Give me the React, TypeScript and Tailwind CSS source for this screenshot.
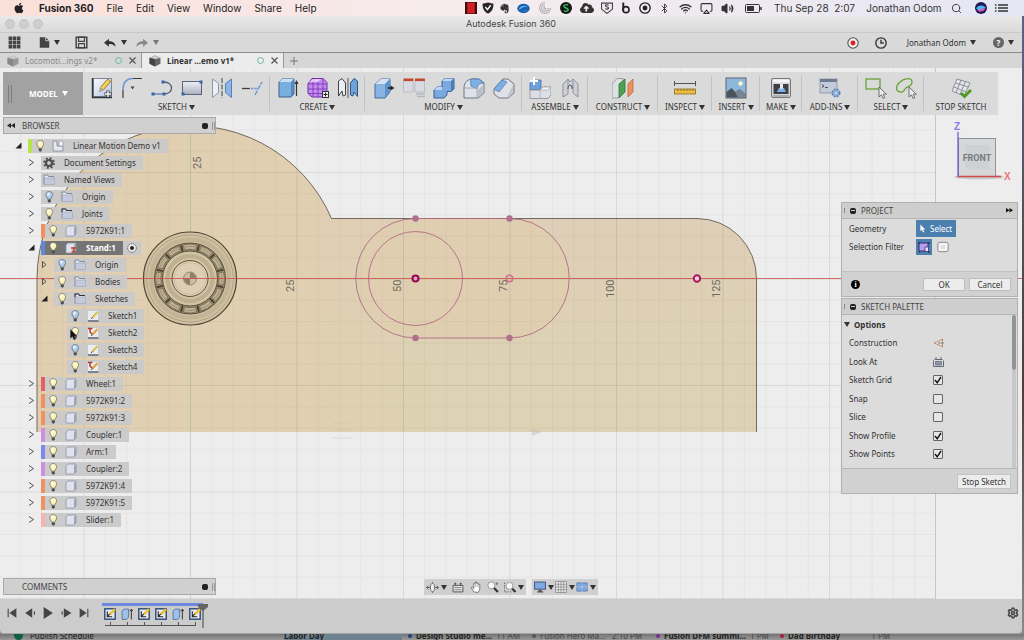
import { useState, type ReactNode } from "react";
import { clsx } from "clsx";
import { Airplay, Bluetooth, Search, Settings, Volume2, Wifi } from "lucide-react";
import { FaApple, FaCloudUploadAlt, FaEvernote } from "react-icons/fa";

type IconProps = { className?: string; children: ReactNode };

function Icon({ className = "size-[22px]", children }: IconProps) {
  return (
    <svg viewBox="0 0 22 22" fill="none" className={clsx("shrink-0", className)} aria-hidden="true">
      {children}
    </svg>
  );
}

function Caret({ className = "w-[6px]" }: { className?: string }) {
  return (
    <svg viewBox="0 0 6 5" className={clsx("shrink-0", className)} aria-hidden="true">
      <path d="M0 0h6L3 5z" fill="currentColor" />
    </svg>
  );
}

/* toolbar icons */

function Nodes({ at }: { at: number[][] }) {
  return (
    <>
      {at.map(([x, y]) => (
        <rect key={`${x}-${y}`} x={x - 1.5} y={y - 1.5} width="3" height="3" fill="#3465b5" />
      ))}
    </>
  );
}

function Cursor({ x, y }: { x: number; y: number }) {
  return (
    <path
      transform={`translate(${x} ${y})`}
      d="M0 0v10l2.4-2.2L4 11.4l1.8-.8-1.6-3.4h3.2z"
      fill="#e9e9ef"
      stroke="#555"
      strokeWidth=".8"
    />
  );
}

const icons = {
  newSketch: (
    <Icon>
      <defs>
        <linearGradient id="sheet" x1="0" y1="0" x2="1" y2="1">
          <stop offset="0" stopColor="#fbfcff" />
          <stop offset="1" stopColor="#b4c1db" />
        </linearGradient>
      </defs>
      <rect x="2.500" y="1.500" width="18" height="18" fill="url(#sheet)" stroke="#7d8696" />
      <path d="M1.500 1v20M1 20.500h20" stroke="#2d3440" strokeWidth="1.400" />
      <path d="M11 11.500l7.500-8.500" stroke="#9b7320" strokeWidth="4.400" />
      <path d="M11 11.500l7-8" stroke="#f3d355" strokeWidth="3" />
      <path d="M8.500 14.500l1-3.500 2.500 2z" fill="#efe0c0" stroke="#444" strokeWidth=".5" />
      <path d="M17 13.500v7M13.500 17h7" stroke="#333" strokeWidth="3" />
      <path d="M17 14v6M14 17h6" stroke="#fff" strokeWidth="1.400" />
    </Icon>
  ),
  fillet2d: (
    <Icon>
      <path d="M2 21v-8M12 1.500h9" stroke="#3d3d3d" strokeWidth="1.200" />
      <path d="M2 13C2 5.500 5.500 1.500 12 1.500" stroke="#6e9ad6" strokeWidth="1.600" />
      <path d="M9.500 9.500h4l-2 3z" fill="#444" />
    </Icon>
  ),
  arc: (
    <Icon>
      <path d="M2 17h10" stroke="#4a6fae" strokeWidth="1.200" />
      <path d="M13 5c10 0 10 12 0 12" stroke="#555e6c" strokeWidth="1.300" />
      <Nodes at={[[2, 17], [13, 17], [12, 5]]} />
    </Icon>
  ),
  rectangle: (
    <Icon>
      <defs>
        <linearGradient id="rectFill" x1="0" y1="0" x2="0" y2="1">
          <stop offset="0" stopColor="#eef0f5" />
          <stop offset="1" stopColor="#a9b0bf" />
        </linearGradient>
      </defs>
      <rect x="1.500" y="4.500" width="19" height="13" fill="url(#rectFill)" stroke="#5a6474" />
      <Nodes at={[[20, 5], [2, 17]]} />
    </Icon>
  ),
  mirror2d: (
    <Icon>
      <path d="M1.500 2l6 4.500v9l-6 5z" fill="#eceef2" stroke="#9298a3" />
      <path d="M11 1v20" stroke="#444" strokeDasharray="5 1.500" />
      <path d="M20.500 2l-6 4.500v9l6 5z" fill="#8db4e2" stroke="#5482bd" />
    </Icon>
  ),
  trim: (
    <Icon>
      <path d="M1 11.500h8" stroke="#3d3d3d" strokeWidth="1.300" />
      <path d="M10 11.500h6" stroke="#6e9ad6" strokeWidth="1.300" strokeDasharray="2.500 1" />
      <path d="M14 18l7-13" stroke="#6e9ad6" strokeWidth="1.500" strokeDasharray="5 1" />
    </Icon>
  ),
  extrude: (
    <Icon>
      <path d="M2 5l3-3h12v15l-3 3H2z" fill="#79aee0" stroke="#3f5f8a" />
      <path d="M2 5l3-3h12l-3 3z" fill="#c9dff4" />
      <path d="M14 5v15l3-3V2z" fill="#5688bf" />
      <path d="M19.500 19V5" stroke="#333" strokeWidth="1.200" />
      <path d="M17.500 7h4l-2-4z" fill="#333" />
    </Icon>
  ),
  form: (
    <Icon>
      <path d="M5 1.500h11l4 4v10l-4 4.500H5l-4-3.500v-10z" fill="#c58cf0" stroke="#6f2bab" />
      <path d="M1 7h19M1 12h19M2 16.500h17M6 1.500v18M11 1.500v18.500M16 1.500v18" stroke="#7d3bb8" strokeWidth=".9" />
      <path d="M2 5l4-3h8l-3 3z" fill="#e3c5fa" />
      <rect x="15.500" y="14.500" width="6" height="6" fill="#eee" stroke="#333" />
      <path d="M18.500 15.500v4M16.500 17.500h4" stroke="#222" />
    </Icon>
  ),
  mirror3d: (
    <Icon>
      <path d="M1.500 4L5 1.500 8.500 6v12l-2.500 1-1-5-3.500 5z" fill="#eceef2" stroke="#3c4149" />
      <path d="M11 1v20" stroke="#555" />
      <path d="M20.500 4v15.500L17 15l-1 4-2.500-1V6L17 1.500z" fill="#6fa3dc" stroke="#34577f" />
    </Icon>
  ),
  pressPull: (
    <Icon>
      <path d="M2 7l6-5h9v13l-5 6H2z" fill="#86b3e2" stroke="#4a6c99" />
      <path d="M2 7l6-5h9l-5 5z" fill="#d5e2f1" />
      <path d="M12 7v14l5-6V2z" fill="#5f92c9" />
      <path d="M15 11h3" stroke="#222" strokeWidth="1.600" />
      <path d="M17.500 8.500v5l4-2.500z" fill="#222" />
    </Icon>
  ),
  replaceFace: (
    <Icon>
      <path d="M.5 4h9.500v11H.5zM12 4h9.500v11H12z" fill="#d9dbe2" stroke="#a9abb4" strokeWidth=".6" />
      <path d="M.5 1.500h10v2.500H.5zM12 1.500h10v2.500H12z" fill="#c4472f" />
      <path d="M13 17h9M14 19.500h8" stroke="#b5b8c1" strokeWidth="1.500" />
    </Icon>
  ),
  combine: (
    <Icon>
      <path d="M9 4l3-2.500h9V12l-3 2.500h-4V18l-3 3H1v-8l3-3h5z" fill="#79a9de" stroke="#3c6297" />
      <path d="M9 4l3-2.500h9L18 4zM1 13l3-3h5v3z" fill="#bed7f2" />
      <path d="M18 4l3-2.500V12l-3 2.500z" fill="#4c7db9" />
    </Icon>
  ),
  fillet3d: (
    <Icon>
      <path d="M1 11c0-6 4-9 9-9h6l5 4v10l-6 5H1z" fill="#dfe1e8" stroke="#6e7480" />
      <path d="M8 2h8l5 4c-5 0-7 3-7 6L8 9c0-3-1-5 0-7z" fill="#7fb0e4" stroke="#4a74a8" strokeWidth=".7" />
      <path d="M2 11h10c2 0 2 2 2 3v6" stroke="#a5aab5" />
      <path d="M14.500 13l6-5v8l-6 4.500z" fill="#bcc0ca" />
    </Icon>
  ),
  chamfer: (
    <Icon>
      <path d="M1 12l9-10h5l6 5v9l-6 5H6l-5-4z" fill="#dfe1e8" stroke="#6e7480" />
      <path d="M9 3l5 2-8 10-5-3z" fill="#7fb0e4" stroke="#4a74a8" strokeWidth=".7" />
      <path d="M14 20l6-4V8z" fill="#c2c5ce" />
    </Icon>
  ),
  newComponent: (
    <Icon>
      <path d="M1 6l3-3h8v8l-2 2H1z" fill="#6da1db" stroke="#486f9f" strokeWidth=".8" />
      <path d="M1 13h10v-1l3-2h8v8l-3 3.500H1z" fill="#dcdee5" stroke="#858a95" strokeWidth=".8" />
      <path d="M11 13l3-3h8l-3 3zM11 13v8" fill="#f1f2f5" stroke="#9a9ea9" strokeWidth=".6" />
      <path d="M5 0v8M1 4h8" stroke="#fff" strokeWidth="2" />
    </Icon>
  ),
  joint: (
    <Icon>
      <path d="M4 7l5-5 2 3 3-3 5 5v13l-5-4v-6l-3-2-2 2v7l-5 3z" fill="#cfd0d7" stroke="#8a8d96" strokeWidth=".9" />
      <path d="M9 2v9M14 2v9" stroke="#8a8d96" strokeWidth=".9" />
      <path d="M9 12c0-5 4-5 4 0" stroke="#666a73" strokeWidth="1.200" />
    </Icon>
  ),
  plane: (
    <Icon>
      <path d="M0 7l5-5.500h6v14L6 21H0z" fill="#dfe0e4" stroke="#8a8d96" strokeWidth=".8" />
      <path d="M7 7l6-5v13l-6 6z" fill="#4fa052" stroke="#2e7634" strokeWidth=".8" />
      <path d="M16 7l5-5v13l-5 5z" fill="#ec9161" stroke="#c7683a" strokeWidth=".8" />
    </Icon>
  ),
  measure: (
    <Icon>
      <path d="M0 6.500h22M.5 4v5M21.500 4v5" stroke="#555" />
      <rect x=".5" y="12" width="21" height="5" fill="#e9bc43" stroke="#8f6a1a" strokeWidth=".8" />
      <path d="M4 12v2M7 12v2M10 12v2M13 12v2M16 12v2M19 12v2" stroke="#6d5010" strokeWidth=".7" />
    </Icon>
  ),
  image: (
    <Icon>
      <rect x="1" y="1" width="20" height="20" fill="#8db8dc" stroke="#596473" />
      <circle cx="15.500" cy="6.500" r="2.200" fill="#fdf6c8" />
      <path d="M1.500 15l5-4 4 4 4-3 6 5v3.500h-19z" fill="#4c535d" />
      <path d="M10 15l4.500-3 6 5v3.500H13z" fill="#798592" />
    </Icon>
  ),
  print: (
    <Icon>
      <rect x="1.500" y="1.500" width="19" height="19" rx="1.500" fill="#d5d6da" stroke="#777" />
      <rect x="3" y="2.500" width="16" height="3" fill="#f5f5f5" />
      <rect x="3.500" y="7" width="15" height="10" fill="#3d4046" />
      <path d="M7 15l2-4h5l2 4z" fill="#7eb1e6" />
      <path d="M10 7h3v4l-1.500 1.500L10 11z" fill="#e9e9e9" />
      <path d="M3 19h16" stroke="#888" />
    </Icon>
  ),
  script: (
    <Icon>
      <rect x="1" y="2" width="17" height="14" fill="#c3cad9" stroke="#8590a6" strokeWidth=".8" />
      <rect x="1" y="2" width="17" height="3" fill="#6f7b92" />
      <path d="M3 7.500l2 1.500-2 1.500M6 10.500h3" stroke="#444" strokeWidth=".9" />
      <circle cx="17" cy="16" r="3.500" fill="#a9c6e8" stroke="#5b82b5" strokeWidth="2" strokeDasharray="1.800 1" />
      <circle cx="17" cy="16" r="1.300" fill="#eee" stroke="#5b82b5" strokeWidth=".5" />
    </Icon>
  ),
  windowSelect: (
    <Icon>
      <rect x="1" y="2" width="14" height="10" stroke="#68a336" strokeWidth="1.300" />
      <Cursor x={14} y={10} />
    </Icon>
  ),
  freeSelect: (
    <Icon>
      <path d="M5 15C0 14 1 8 5 5c4-4 12-5 12 0s-5 4-7 7c-1 2-2 4-5 3z" stroke="#68a336" strokeWidth="1.300" />
      <Cursor x={14} y={10} />
    </Icon>
  ),
  stopSketch: (
    <Icon>
      <path d="M7 2l13 4-6 13-12-5z" fill="#e2e4ea" stroke="#7a7f8b" strokeWidth=".8" />
      <path d="M5.500 6l13 4M4 10l12 5M11 3L6 16M15.500 4.500L10 17.500" stroke="#7a7f8b" strokeWidth=".8" />
      <path d="M11 16l3.500 3.500L21 13" stroke="#4f9a27" strokeWidth="3" />
    </Icon>
  ),
};

const groups = [
  { name: "SKETCH", width: "w-[187px]", tools: ["newSketch", "fillet2d", "arc", "rectangle", "mirror2d", "trim"] },
  { name: "CREATE", width: "w-[95px]", tools: ["extrude", "form", "mirror3d"] },
  { name: "MODIFY", width: "w-[157px]", tools: ["pressPull", "replaceFace", "combine", "fillet3d", "chamfer"] },
  { name: "ASSEMBLE", width: "w-[66px]", tools: ["newComponent", "joint"] },
  { name: "CONSTRUCT", width: "w-[70px]", tools: ["plane"] },
  { name: "INSPECT", width: "w-[54px]", tools: ["measure"] },
  { name: "INSERT", width: "w-[48px]", tools: ["image"] },
  { name: "MAKE", width: "w-[42px]", tools: ["print"] },
  { name: "ADD-INS", width: "w-[56px]", tools: ["script"] },
  { name: "SELECT", width: "w-[66px]", tools: ["windowSelect", "freeSelect"] },
  { name: "STOP SKETCH", width: "w-[74px]", tools: ["stopSketch"] },
] as { name: string; width: string; tools: (keyof typeof icons)[] }[];

function Toolbar() {
  return (
    <div className="relative mt-1 ml-[3px] flex h-[43px] w-fit bg-[#dadada]">
      <button className="flex w-20 items-center gap-[17px] bg-[#a2a2a2] pl-[5px] text-[8px] font-bold text-white">
        <span className="h-[18px] w-1 border-x border-[#7d7d7d]" />
        <span className="flex items-center gap-1">
          MODEL <Caret />
        </span>
      </button>
      {groups.map((group) => (
        <div key={group.name} className={clsx("relative flex flex-col items-center pt-[5px]", group.width)}>
          <div className="flex gap-2">
            {group.tools.map((tool) => (
              <button key={tool} aria-label={tool}>
                {icons[tool]}
              </button>
            ))}
          </div>
          <button className="mt-[3px] flex items-center gap-[2px] text-[8px] leading-[10px] whitespace-nowrap text-[#333]">
            {group.name}
            {group.name !== "STOP SKETCH" && <Caret />}
          </button>
          {group.name !== "STOP SKETCH" && <span className="absolute inset-y-1 right-0 w-px bg-[#c2c2c2]" />}
        </div>
      ))}
    </div>
  );
}

/* browser tree */

type Glyph = "bulb" | "bulbOff" | "folder" | "folderDark" | "gear" | "cube" | "stand" | "doc" | "sketch" | "sketchRed";

function TreeIcon({ kind }: { kind: Glyph }) {
  switch (kind) {
    case "bulb":
    case "bulbOff":
      return (
        <svg viewBox="0 0 10 14" className="h-[12px]">
          <path
            d="M5 .6C2.400.6 1 2.400 1 4.600 1 6.500 3 7.500 3 9.500h4c0-2 2-3 2-4.900C9 2.400 7.600.6 5 .6z"
            fill={kind === "bulb" ? "#fbf2b5" : "#a9cdf5"}
            stroke="#6b6650"
            strokeWidth=".8"
          />
          <ellipse cx="4" cy="3.600" rx="1.500" ry="1.800" fill="#fff" opacity=".8" />
          <path d="M3.200 10h3.600v2.500L5 13.600l-1.800-1.100z" fill="#4d4d4d" />
        </svg>
      );
    case "folder":
    case "folderDark":
      return (
        <svg viewBox="0 0 12 11" className="w-[12px]">
          <path d="M1 10.500V1h3.500l1 1.500H11" fill="#e3e6f0" stroke="#7b8190" strokeWidth=".9" />
          <path d="M1.500 4h10v6.500h-10z" fill="#c4cadd" stroke="#9ba1b3" strokeWidth=".6" />
          {kind === "folderDark" && <path d="M1 4V1h3.500l1 1.500H11" stroke="#2f3441" strokeWidth="1.100" fill="none" />}
        </svg>
      );
    case "gear":
      return (
        <svg viewBox="0 0 12 12" className="w-[12px]">
          <circle cx="6" cy="6" r="4.900" fill="none" stroke="#4c4c4c" strokeWidth="1.800" strokeDasharray="2 1.850" />
          <circle cx="6" cy="6" r="3" fill="none" stroke="#4c4c4c" strokeWidth="2.200" />
        </svg>
      );
    case "doc":
      return (
        <svg viewBox="0 0 12 12" className="w-[12px]">
          <path d="M1 1v10h10V6H5V1z" fill="#e6e8ee" stroke="#8a8f9b" strokeWidth=".9" />
          <path d="M7 1h3l1 1v4H7z" fill="#f6f7fa" stroke="#8a8f9b" strokeWidth=".7" />
        </svg>
      );
    case "cube":
    case "stand":
      return (
        <svg viewBox="0 0 12 12" className="w-[12px]">
          <path d="M1 3l2-2h8v8l-2 2H1z" fill="#dfe2ee" stroke="#8d92a1" strokeWidth=".8" />
          <path d="M9 3l2-2v8l-2 2z" fill="#9da3b7" />
          {kind === "stand" && <path d="M6 6h5M8.500 5v6M6.500 10h4" stroke="#c04a32" strokeWidth="1.600" />}
        </svg>
      );
    default:
      return (
        <svg viewBox="0 0 12 12" className="w-[12px]">
          <path d="M1 1h10v9H1z" fill="#e9ecf5" />
          <path d="M1 11h10.500" stroke="#4a5165" strokeWidth="1.200" />
          <path d="M5 8l5.500-6" stroke={kind === "sketch" ? "#d9c24a" : "#e0a23c"} strokeWidth="2" />
          <path d="M4 9l1.500-1.500" stroke="#555" />
          {kind === "sketchRed" && <path d="M1 1.500h4.500M3 1v4l2 2" stroke="#b8382b" strokeWidth="1.500" fill="none" />}
        </svg>
      );
  }
}

type Row = { label: string; level: 0 | 1 | 2 | 3; glyphs: Glyph[]; open?: boolean; bar?: string; hovered?: boolean };

const rows: Row[] = [
  { label: "Linear Motion Demo v1", level: 0, glyphs: ["bulb", "doc"], open: true, bar: "bg-[#b9e34d]" },
  { label: "Document Settings", level: 1, glyphs: ["gear"] },
  { label: "Named Views", level: 1, glyphs: ["folder"] },
  { label: "Origin", level: 1, glyphs: ["bulbOff", "folder"] },
  { label: "Joints", level: 1, glyphs: ["bulb", "folderDark"] },
  { label: "5972K91:1", level: 1, glyphs: ["bulb", "cube"], bar: "bg-[#f0925f]" },
  { label: "Stand:1", level: 1, glyphs: ["bulb", "stand"], open: true, bar: "bg-[#6288dd]" },
  { label: "Origin", level: 2, glyphs: ["bulbOff", "folder"] },
  { label: "Bodies", level: 2, glyphs: ["bulb", "folder"] },
  { label: "Sketches", level: 2, glyphs: ["bulb", "folderDark"], open: true },
  { label: "Sketch1", level: 3, glyphs: ["bulbOff", "sketch"] },
  { label: "Sketch2", level: 3, glyphs: ["bulb", "sketchRed"], hovered: true },
  { label: "Sketch3", level: 3, glyphs: ["bulbOff", "sketch"] },
  { label: "Sketch4", level: 3, glyphs: ["bulb", "sketchRed"] },
  { label: "Wheel:1", level: 1, glyphs: ["bulb", "cube"], bar: "bg-[#e2606b]" },
  { label: "5972K91:2", level: 1, glyphs: ["bulb", "cube"], bar: "bg-[#f0925f]" },
  { label: "5972K91:3", level: 1, glyphs: ["bulb", "cube"], bar: "bg-[#f0925f]" },
  { label: "Coupler:1", level: 1, glyphs: ["bulb", "cube"], bar: "bg-[#cc8fe0]" },
  { label: "Arm:1", level: 1, glyphs: ["bulb", "cube"], bar: "bg-[#8186f2]" },
  { label: "Coupler:2", level: 1, glyphs: ["bulb", "cube"], bar: "bg-[#cc8fe0]" },
  { label: "5972K91:4", level: 1, glyphs: ["bulb", "cube"], bar: "bg-[#f0925f]" },
  { label: "5972K91:5", level: 1, glyphs: ["bulb", "cube"], bar: "bg-[#f0925f]" },
  { label: "Slider:1", level: 1, glyphs: ["bulb", "cube"], bar: "bg-[#f7b3b3]" },
];

const indents = ["pl-[5px]", "pl-[18px]", "pl-[31px]", "pl-[44px]"];

function Arrow({ row }: { row: Row }) {
  if (row.level === 3) return null;
  return (
    <svg viewBox="0 0 7 7" className="w-[7px]" aria-hidden="true">
      {row.open ? (
        <path d="M6.500.5v6h-6z" fill="#222" />
      ) : (
        <path d={row.level === 2 ? "M1.500.5L5 3.500 1.500 6.500z" : "M1 .5l4.500 3L1 6.500"} fill="none" stroke="#444" strokeWidth=".9" />
      )}
    </svg>
  );
}

function TreeRow({ row }: { row: Row }) {
  const active = row.label === "Stand:1";
  return (
    <li className={clsx("relative flex h-[17px] items-center", indents[row.level])}>
      <span className="flex w-5 justify-center">
        <Arrow row={row} />
      </span>
      <button
        className={clsx(
          "flex h-[14px] items-center pr-[7px] text-[8px] leading-[14px]",
          active ? "bg-[#757575] font-bold text-white" : "bg-[#c9c9c9]/95 text-[#333]",
        )}
      >
        {row.bar && <span className={clsx("h-full w-1", row.bar)} />}
        <span className="flex gap-0.5">
          {row.glyphs.map((glyph) => (
            <span key={glyph} className="flex w-4 items-center justify-center">
              <TreeIcon kind={glyph} />
            </span>
          ))}
        </span>
        <span className="ml-[7px]">{row.label}</span>
      </button>
      {active && (
        <span className="flex h-[14px] w-[18px] items-center justify-center bg-[#c9c9c9]">
          <svg viewBox="0 0 10 10" className="w-[10px]">
            <circle cx="5" cy="5" r="4.300" fill="#eee" stroke="#444" strokeWidth=".8" strokeDasharray="1.500 .8" />
            <circle cx="5" cy="5" r="2" fill="#222" />
          </svg>
        </span>
      )}
      {row.hovered && (
        <svg viewBox="0 0 9 13" className="absolute top-[5px] left-[67px] w-[8px]">
          <path d="M.5.5v10l2.300-2L4.400 12.200l1.900-.8L4.700 7.900h3z" fill="#111" stroke="#555" strokeWidth=".5" />
        </svg>
      )}
    </li>
  );
}

function PanelHeader({ title, rewind }: { title: string; rewind?: boolean }) {
  return (
    <div className="flex h-[17px] items-center border border-[#a9a9a9] bg-[#d0d0d0] text-[8px] text-[#444]">
      <span className="w-[18px] pl-[3px]">
        {rewind && (
          <svg viewBox="0 0 8 5" className="w-[8px]">
            <path d="M4 0v5L0 2.500zM8 0v5L4 2.500z" fill="#222" />
          </svg>
        )}
      </span>
      {title}
      <span className="mr-1 ml-auto size-[6px] rounded-[2px] bg-[#222]" />
      <span className="h-2 w-[3px] border-x border-[#999]" />
    </div>
  );
}

function Browser() {
  return (
    <aside className="mt-[2px] mb-1 ml-[3px] flex w-[213px] flex-col">
      <PanelHeader title="BROWSER" rewind />
      <ul className="mt-[3px]">
        {rows.map((row) => (
          <TreeRow key={row.label + row.level} row={row} />
        ))}
      </ul>
      <div className="mt-auto">
        <PanelHeader title="COMMENTS" />
      </div>
    </aside>
  );
}

/* model view */

const rulerLabels = [
  { text: "25", x: 294, y: 292 },
  { text: "50", x: 401, y: 292 },
  { text: "75", x: 507, y: 292 },
  { text: "100", x: 614, y: 298 },
  { text: "125", x: 720, y: 298 },
  { text: "25", x: 201, y: 169 },
];

function Bearing() {
  const balls = Array.from({ length: 12 }, (_, i) => i * 30);
  return (
    <g transform="translate(190 278.5)" fill="none" stroke="#4d4534">
      <circle r="46.500" fill="#d0c0a2" strokeWidth="1.200" />
      <circle r="43.500" stroke="#a69779" strokeWidth=".7" />
      <circle r="39" stroke="#c4b496" strokeWidth="4" />
      <circle r="35.500" fill="#9a8c71" strokeWidth=".9" />
      {balls.map((angle) => (
        <g key={angle} transform={`rotate(${angle})`}>
          <path d="M-6.500-33.500Q0-35.500 6.500-33.500L5.500-28.500Q0-30 -5.500-28.500z" fill="#c0b193" stroke="#6e6450" strokeWidth=".7" />
          <path d="M-5-31.500Q0-33 5-31.500" stroke="#a09274" />
          <path d="M0-34.500V-28" stroke="#453e2f" strokeWidth="1.800" transform="rotate(15)" />
        </g>
      ))}
      <circle r="27.500" fill="#d3c3a5" strokeWidth=".9" />
      <circle r="22.500" stroke="#bfaf91" strokeWidth="4" />
      <circle r="18" fill="#dfcfb2" strokeWidth=".9" />
      <circle r="16" stroke="#c3b496" strokeWidth=".7" />
      <circle r="6.500" fill="#cdbd9f" stroke="#8d846f" strokeWidth="1" />
      <path d="M0 0V-6A6 6 0 0 1 6 0zM0 0V6A6 6 0 0 1-6 0z" fill="#8a816d" stroke="none" />
    </g>
  );
}

function Canvas() {
  const outline = "M37 432V278.500A153.500 153.500 0 0 1 331.500 218.500H697A59.500 60 0 0 1 756.500 278.500V432";
  const slot = "M415.500 218.500H509.500A59.750 59.750 0 0 1 509.500 338H415.500A59.750 59.750 0 0 1 415.500 218.500z";
  return (
    <svg className="absolute inset-0 h-full w-full" aria-hidden="true">
      <defs>
        <pattern id="minor" width="21.3" height="21.3" patternUnits="userSpaceOnUse" x="190" y="278.500">
          <path d="M0 0H21.300M0 0V21.300" stroke="#000" strokeOpacity=".07" fill="none" />
        </pattern>
        <pattern id="major" width="106.5" height="106.5" patternUnits="userSpaceOnUse" x="190" y="278.500">
          <path d="M0 0H106.500M0 0V106.500" stroke="#000" strokeOpacity=".1" fill="none" />
        </pattern>
        <linearGradient id="wood" x1="0" y1="0" x2="0" y2="1">
          <stop offset=".3" stopColor="#dfceb8" />
          <stop offset=".8" stopColor="#ddd2b3" />
        </linearGradient>
        <linearGradient id="woodLeft" x1="0" y1="0" x2="1" y2="0">
          <stop offset=".35" stopColor="#e1cfb1" />
          <stop offset=".55" stopColor="#e1cfb1" stopOpacity="0" />
        </linearGradient>
      </defs>
      <g transform="translate(0 -68)">
        <path d={outline} fill="url(#wood)" />
        <path d={outline} fill="url(#woodLeft)" />
        <path d={slot} fill="#e0ceb0" />
        <rect y="68" width="935.500" height="532" fill="url(#minor)" />
        <rect y="68" width="935.500" height="532" fill="url(#major)" />
        <path d="M935.500 68V600" stroke="#c6c6c6" />
        <path d="M190.500 68V600" stroke="#8fd08f" strokeOpacity=".25" />
        <path d={outline} fill="none" stroke="#5d564b" strokeOpacity=".85" />
        <path d="M333 423h16M333 430h20M333 438h20" stroke="#c9bda6" strokeOpacity=".4" />
        <path d="M532 428l10 4-10 4z" fill="#c9c5bb" opacity=".6" />
        <Bearing />
        <path d="M0 278.500H1024" stroke="#cf4a4a" strokeOpacity=".8" />
        <g fill="none" stroke="#b06a86" strokeWidth=".9">
          <path d={slot} />
          <circle cx="415.500" cy="278.500" r="47" />
          <circle cx="509.500" cy="278.500" r="3.200" stroke="#d0708a" strokeWidth="1.400" />
        </g>
        {[415.5, 509.5].map((x) => (
          <g key={x} fill="#b0718c">
            <circle cx={x} cy="218.500" r="3.200" />
            <circle cx={x} cy="338" r="3.200" />
          </g>
        ))}
        <circle cx="415.500" cy="278.500" r="3" fill="#e8a5c5" stroke="#92104f" strokeWidth="2.200" />
        <circle cx="697" cy="278.500" r="3.200" fill="#f3cfe0" stroke="#a8155e" strokeWidth="1.900" />
        <g fill="#6d6a63" className="font-['Roboto'] text-[11px]">
          {rulerLabels.map(({ text, x, y }) => (
            <text key={`${x}`} transform={`translate(${x} ${y}) rotate(-90)`}>
              {text}
            </text>
          ))}
        </g>
      </g>
    </svg>
  );
}

function ViewCube() {
  return (
    <svg viewBox="0 0 73 66" className="mt-[3px] h-[66px] w-[73px] self-end">
      <ellipse cx="34" cy="59" rx="25" ry="2.500" fill="#000" opacity=".15" />
      <rect x="13.500" y="20.500" width="37" height="38" fill="#d6d7d9" stroke="#8f9297" />
      <rect x="20" y="27" width="24" height="24" fill="#cfd0d3" />
      <path d="M13 14v45" stroke="#6a5fd0" strokeWidth="1.300" />
      <path d="M13 58.500h43" stroke="#cf4a4a" strokeWidth="1.400" />
      <g className="font-['Liberation_Sans'] text-[10px]">
        <text x="9" y="12" fill="#8a7cf0" fontWeight="bold">Z</text>
        <text x="59" y="62" fill="#ef7373" fontWeight="bold">X</text>
      </g>
      <text x="32" y="43" textAnchor="middle" fill="#777b81" className="font-['Roboto'] text-[9px] font-bold">
        FRONT
      </text>
    </svg>
  );
}

/* right panels */

function PaletteHeader({ title, forward }: { title: string; forward?: boolean }) {
  return (
    <div className="flex h-4 shrink-0 items-center border-b border-[#b5b5b5] bg-[#cecece] text-[8px] text-[#444]">
      <span className="ml-[2px] h-[5px] w-px bg-[#888]" />
      <span className="mr-[5px] ml-[5px] flex size-[6px] items-center rounded-[2px] bg-[#222] px-px">
        <span className="h-px w-full bg-[#ccc]" />
      </span>
      {title}
      {forward && (
        <svg viewBox="0 0 8 5" className="mr-1 ml-auto w-[7px]">
          <path d="M0 0v5l4-2.500zM4 0v5l4-2.500z" fill="#111" />
        </svg>
      )}
    </div>
  );
}

function ProjectPanel() {
  const button = "h-[13px] w-[42px] border border-[#bdbdbd] bg-[#ececec] text-[8px] leading-[11px] text-[#333]";
  return (
    <section className="mt-[18px] border border-[#b0b0b0] bg-[#dcdcdc] text-[8px] text-[#333]">
      <PaletteHeader title="PROJECT" forward />
      <div className="flex h-[52px] flex-col gap-[2px] pt-px pl-[7px]">
        <div className="flex h-[17px] items-center">
          <span className="w-[67px]">Geometry</span>
          <button className="flex h-[17px] w-10 items-center gap-1 bg-[#4a7fae] pl-1 text-white">
            <svg viewBox="0 0 8 12" className="w-[6px]">
              <path d="M.5.5v9l2-1.800 1.500 3.500 1.600-.7-1.500-3.300h2.800z" fill="#fff" />
            </svg>
            Select
          </button>
        </div>
        <div className="flex h-4 items-center">
          <span className="w-[67px]">Selection Filter</span>
          <button aria-label="Filter specified entities" className="flex size-4 items-center justify-center bg-[#4a7fae]">
            <svg viewBox="0 0 12 12" className="w-[12px]">
              <rect x="1" y="2" width="9" height="8" fill="#b79df0" stroke="#3b2d66" />
              <path d="M7 6h3.500v4.500H7z" fill="#e9defd" stroke="#3b2d66" strokeWidth=".7" />
              <path d="M0 2h2M10 2h2M1 11h1M10 11h2" stroke="#222" />
            </svg>
          </button>
          <button aria-label="Filter bodies" className="ml-1 flex size-[13px] items-center justify-center">
            <svg viewBox="0 0 12 12" className="w-[12px]">
              <rect x=".8" y="1.300" width="10.400" height="9.400" rx="2" fill="#f4f4f4" stroke="#888" />
              <path d="M4 4h4v4H4z" fill="#e0e0e0" />
            </svg>
          </button>
        </div>
      </div>
      <div className="flex h-[25px] items-center border-t border-[#c0c0c0] bg-[#d1d1d1] pr-[6px] pl-[9px]">
        <span className="flex size-[9px] items-center justify-center rounded-full bg-black font-['Liberation_Serif'] text-[8px] leading-[9px] font-bold text-white">
          i
        </span>
        <button className={clsx("mr-1 ml-auto", button)}>OK</button>
        <button className={button}>Cancel</button>
      </div>
    </section>
  );
}

const options = [
  { label: "Sketch Grid", checked: true },
  { label: "Snap", checked: false },
  { label: "Slice", checked: false },
  { label: "Show Profile", checked: true },
  { label: "Show Points", checked: true },
];

function CheckBox({ id, defaultChecked, label }: { id: string; defaultChecked: boolean; label?: string }) {
  return (
    <span className="relative flex size-[10px]">
      <input
        id={id}
        type="checkbox"
        aria-label={label}
        defaultChecked={defaultChecked}
        className="peer size-[10px] appearance-none rounded-[1px] border border-[#666] bg-[#e6e6e6]"
      />
      <svg viewBox="0 0 10 10" className="pointer-events-none absolute inset-0 hidden peer-checked:block">
        <path d="M2 5l2.200 2.800L8 2" fill="none" stroke="#111" strokeWidth="1.400" />
      </svg>
    </span>
  );
}

function SketchPalette() {
  const row = "flex flex-1 items-center";
  return (
    <section className="mt-px border border-[#b0b0b0] bg-[#dcdcdc] text-[8px] text-[#333]">
      <PaletteHeader title="SKETCH PALETTE" />
      <div className="relative h-[153px] overflow-hidden">
        <button className="flex h-[19px] items-center gap-1 pl-[2px] font-bold">
          <Caret />
          Options
        </button>
        <div className="flex h-[148px] flex-col pl-[7px]">
          <div className={row}>
            <span className="w-[84px]">Construction</span>
            <button aria-label="Toggle construction">
              <svg viewBox="0 0 11 10" className="w-[11px]">
                <path d="M10 1L1 5l9 4M9.500 1v8" fill="none" stroke="#b9805b" strokeDasharray="2 .6" />
                <path d="M5 5h6" stroke="#666" strokeWidth=".7" />
              </svg>
            </button>
          </div>
          <div className={row}>
            <span className="w-[84px]">Look At</span>
            <button aria-label="Look at sketch">
              <svg viewBox="0 0 11 10" className="w-[11px]">
                <path d="M.5 3.500v6h10v-6M3 0v2M8 0v2M1.500 2.500h8" fill="none" stroke="#555c6c" strokeWidth=".9" />
                <path d="M2.500 4.500h6v3.500h-6z" fill="#8d96ac" stroke="#4d556b" strokeWidth=".6" />
              </svg>
            </button>
          </div>
          {options.map((option) => (
            <div key={option.label} className={row}>
              <label htmlFor={option.label} className="w-[84px]">
                {option.label}
              </label>
              <CheckBox id={option.label} defaultChecked={option.checked} />
            </div>
          ))}
          <div className={row}>
            <span className="w-[84px]" />
            <CheckBox id="dimensions" label="Show Dimensions" defaultChecked />
          </div>
        </div>
        <span className="absolute top-0 right-px h-[55px] w-1 rounded-full bg-[#949494]" />
        <span className="absolute top-[55px] right-px bottom-0 w-1 bg-[#c8c8c8]" />
      </div>
      <div className="flex h-[25px] items-center justify-end border-t border-[#b5b5b5] bg-[#d1d1d1] pr-[6px]">
        <button className="h-[15px] w-[54px] border border-[#c4c4c4] bg-[#ececec] leading-[13px] whitespace-nowrap">
          Stop Sketch
        </button>
      </div>
    </section>
  );
}

function NavBar() {
  return (
    <nav className="mb-1 flex h-4 gap-[6px] self-end text-[#333]">
      <div className="flex w-[102px] items-center justify-between bg-[#cfcfcf] px-[2px]">
        <button aria-label="Orbit" className="flex items-center gap-[2px]">
          <Icon className="size-[13px]">
            <path d="M11 2v18M1 11h20M4 8l-3 3 3 3M18 8l3 3-3 3" stroke="#555" strokeWidth="1.500" />
            <ellipse cx="11" cy="11" rx="3.500" ry="7" fill="#eee" stroke="#666" strokeWidth="1.500" />
          </Icon>
          <Caret />
        </button>
        <button aria-label="Look at">
          <Icon className="size-[12px]">
            <path d="M2 8h18v12H2zM6 3v5M16 3v5M4 5h4M14 5h4" fill="#e2e2e6" stroke="#555" strokeWidth="1.800" />
            <path d="M5 12h12M5 16h12" stroke="#777" strokeWidth="1.500" />
          </Icon>
        </button>
        <button aria-label="Pan">
          <Icon className="size-[12px]">
            <path d="M7 20l-5-8 2-1 3 3V4h3V2h2v2h3v2h3v9l-3 6z" fill="#fff" stroke="#666" strokeWidth="1.500" />
            <path d="M10 4v7M13 4v7M16 6v6" stroke="#888" />
          </Icon>
        </button>
        <button aria-label="Zoom">
          <Icon className="size-[12px]">
            <path d="M12 12l8 8" stroke="#333" strokeWidth="4" />
            <circle cx="8" cy="8" r="6.500" fill="#f6f8fc" stroke="#888" strokeWidth="1.500" />
            <path d="M18 2v6M15.500 5h5" stroke="#555" strokeWidth="1.200" />
          </Icon>
        </button>
        <button aria-label="Zoom window" className="flex items-center gap-[2px]">
          <Icon className="size-[12px]">
            <path d="M1 3v17h13" stroke="#555" strokeWidth="1.500" strokeDasharray="2.500 2" />
            <path d="M14 13l7 7" stroke="#333" strokeWidth="4" />
            <circle cx="10" cy="9" r="6.500" fill="#f6f8fc" stroke="#888" strokeWidth="1.500" />
          </Icon>
          <Caret />
        </button>
      </div>
      <div className="flex w-[66px] items-center justify-between bg-[#cfcfcf] px-[2px]">
        <button aria-label="Display settings" className="flex items-center gap-[2px]">
          <Icon className="size-[12px]">
            <rect x="1" y="2" width="20" height="13" fill="#7eaae4" stroke="#4b5f85" strokeWidth="2" />
            <path d="M8 16h6v3h3v2H6v-2h2z" fill="#555" />
          </Icon>
          <Caret />
        </button>
        <button aria-label="Grid and snaps" className="flex items-center gap-[2px]">
          <Icon className="size-[12px]">
            <path d="M1 1h20v20H1zM6 1v20M11 1v20M16 1v20M1 6h20M1 11h20M1 16h20" fill="#eee" stroke="#777" strokeWidth="1.200" />
          </Icon>
          <Caret />
        </button>
        <button aria-label="Viewports" className="flex items-center gap-[2px]">
          <Icon className="size-[12px]">
            <path d="M1 3h20v16H1z" fill="#365c94" />
            <path d="M2 4h8v6H2zM12 4h8v6h-8zM2 12h8v6H2zM12 12h8v6h-8z" fill="#78aaea" />
            <path d="M11 3v16M1 11h20" stroke="#e4ecf7" strokeWidth="1.500" />
          </Icon>
          <Caret />
        </button>
      </div>
    </nav>
  );
}

/* window chrome */

function MenuBar() {
  return (
    <header className="flex h-4 shrink-0 items-center bg-linear-to-r from-[#fbdfd9] via-[#f6ecee] via-45% to-[#e6e7f4] font-['Inter'] text-[10px] leading-4 text-[#222]">
      <FaApple size={12} className="ml-[13px]" />
      <nav className="ml-[14px] flex gap-[13px]">
        <button className="font-bold">Fusion 360</button>
        {["File", "Edit", "View", "Window", "Share", "Help"].map((menu) => (
          <button key={menu}>{menu}</button>
        ))}
      </nav>
      <div className="ml-auto flex items-center text-[#333] *:flex *:justify-center">
        <span className="w-[17px]">
          <Icon className="size-[12px]">
            <path d="M0 0h22v22H0z" fill="#3a0d0d" />
            <path d="M4 1h14v20H4z" fill="#cf1f22" />
          </Icon>
        </span>
        <span className="w-[17px]">
          <Icon className="size-[12px]">
            <path d="M1 3l10-2 10 2c0 9-3 15-10 18C4 18 1 12 1 3z" fill="#262626" />
            <path d="M6 9l4 5 6-8" stroke="#fff" strokeWidth="2.500" />
          </Icon>
        </span>
        <span className="w-[17px]"><FaEvernote size={11} /></span>
        <span className="w-[21px]">
          <Icon className="size-[13px]">
            <ellipse cx="11" cy="11" rx="10.500" ry="8" fill="#1a5fae" />
            <path d="M3 13c1-7 12-9 15-4-3-1-7-1-9 1-2 1-4 2-6 3z" fill="#58b2ea" />
            <path d="M6 14c4 2 9 1 12-2-1 4-8 6-12 2z" fill="#3f93d8" />
          </Icon>
        </span>
        <span className="w-[21px]">
          <Icon className="size-[12px]">
            <path d="M11 1a10 10 0 1 0 10 10M11 5a6 6 0 1 0 6 6M11 9a2 2 0 1 0 2 2" stroke="#aaa" strokeWidth="2" />
          </Icon>
        </span>
        <span className="w-[21px]">
          <Icon className="size-[12px]">
            <circle cx="11" cy="11" r="11" fill="#161616" />
            <path d="M15 6c-3-2-8-1-8 2s8 3 8 6-5 4-8 2" stroke="#35c46a" strokeWidth="2.500" />
          </Icon>
        </span>
        <span className="w-[21px]"><FaCloudUploadAlt size={14} /></span>
        <span className="w-[19px]">
          <Icon className="size-[12px]">
            <path d="M1 2h20v11l-10 8-10-8z" stroke="#444" strokeWidth="2" />
            <path d="M14 6c-3-2-6-1-6 1s6 2 6 4-4 3-6 1" stroke="#333" strokeWidth="2" />
          </Icon>
        </span>
        <span className="w-[19px]">
          <Icon className="size-[12px]">
            <path d="M6 1v15" stroke="#222" strokeWidth="3.500" />
            <circle cx="11" cy="14" r="5.500" stroke="#222" strokeWidth="3" />
          </Icon>
        </span>
        <span className="w-[19px]">
          <Icon className="size-[12px]">
            <circle cx="11" cy="11" r="9.500" stroke="#222" strokeWidth="2.500" />
            <circle cx="11" cy="11" r="4.500" fill="#222" />
          </Icon>
        </span>
        <span className="w-[21px]"><Bluetooth size={11} /></span>
        <span className="w-[21px]"><Wifi size={13} strokeWidth={2.5} /></span>
        <span className="w-[21px]"><Airplay size={13} /></span>
        <span className="w-[21px]"><Volume2 size={13} fill="#333" /></span>
        <span className="w-[30px]">
          <svg viewBox="0 0 17 9" className="w-[17px]">
            <rect x=".5" y=".5" width="14" height="8" rx="1" fill="none" stroke="#333" />
            <path d="M2 2h7v5H2z" fill="#333" />
            <path d="M16 3v3" stroke="#333" strokeWidth="1.500" />
          </svg>
        </span>
        <span className="ml-[7px] w-[79px] whitespace-pre">Thu Sep 28  2:07</span>
        <span className="ml-[13px] w-[74px] whitespace-nowrap">Jonathan Odom</span>
        <span className="ml-[10px]"><Search size={11} /></span>
        <span className="ml-[13px]">
          <Icon className="size-[12px]">
            <circle cx="11" cy="11" r="11" fill="#241a55" />
            <path d="M2 12c5-8 12-6 18-2-4 1-7 5-11 5s-5-2-7-3z" fill="#49b9ef" />
            <path d="M4 15c5 1 10-5 15-3-2 5-10 8-15 3z" fill="#e15bb3" />
          </Icon>
        </span>
        <span className="mr-4 ml-2">
          <svg viewBox="0 0 13 8" className="w-[13px]">
            <path d="M3 1h10M3 4h10M3 7h10M0 1h1.500M0 4h1.500M0 7h1.500" stroke="#333" strokeWidth="1.300" />
          </svg>
        </span>
      </div>
    </header>
  );
}

function TitleBar() {
  return (
    <div className="relative flex h-4 shrink-0 items-center justify-center bg-linear-to-b from-[#e9e9e9] to-[#dadada] font-['Inter'] text-[9px] text-[#444]">
      <div className="absolute left-[5px] flex gap-1">
        {["Close", "Minimize", "Zoom"].map((name) => (
          <button key={name} aria-label={name} className="size-[10px] rounded-full border border-[#c3c3c3] bg-[#cfcfcf]" />
        ))}
      </div>
      <h1>Autodesk Fusion 360</h1>
    </div>
  );
}

function QuickAccess() {
  return (
    <div className="flex h-[21px] shrink-0 items-center border-t border-b border-t-[#c9c9c9] border-b-[#8c8c8c] bg-[#d9d9d9] pl-2 text-[8px] text-[#333]">
      <button aria-label="Data panel">
        <Icon className="size-[13px]">
          <path d="M1 1h6v6H1zM8 1h6v6H8zM15 1h6v6h-6zM1 8h6v6H1zM8 8h6v6H8zM15 8h6v6h-6zM1 15h6v6H1zM8 15h6v6H8zM15 15h6v6h-6z" fill="#444" />
        </Icon>
      </button>
      <button aria-label="File" className="ml-[17px] flex items-center gap-[3px]">
        <Icon className="size-[13px]">
          <path d="M3 2h10l6 6v12H3z" fill="#444" />
          <path d="M13 2v6h6" stroke="#d9d9d9" strokeWidth="1.500" />
        </Icon>
        <Caret />
      </button>
      <button aria-label="Save" className="ml-[15px]">
        <Icon className="size-[13px]">
          <path d="M2 2h18v18H2z" stroke="#444" strokeWidth="2.500" />
          <path d="M6 2h10v7H6zM6 13h10v7H6z" stroke="#444" strokeWidth="2" />
        </Icon>
      </button>
      <button aria-label="Undo" className="ml-[16px] flex items-center gap-[5px]">
        <Icon className="size-[12px]">
          <path d="M9 3v5c7 0 12 3 12 10-3-4-7-5-12-5v5L0 10.500z" fill="#333" />
        </Icon>
        <Caret />
      </button>
      <button aria-label="Redo" className="ml-[9px] flex items-center gap-[5px] text-[#777]">
        <Icon className="size-[12px]">
          <path d="M13 3v5C6 8 1 11 1 18c3-4 7-5 12-5v5l9-7.500z" fill="#888" />
        </Icon>
        <Caret />
      </button>
      <div className="mr-2 ml-auto flex items-center">
        <button aria-label="Record">
          <Icon className="size-[12px]">
            <circle cx="11" cy="11" r="9.500" fill="#eee" stroke="#555" strokeWidth="2" />
            <circle cx="11" cy="11" r="4.500" fill="#d22" />
          </Icon>
        </button>
        <button aria-label="Job status" className="ml-4">
          <Icon className="size-[12px]">
            <circle cx="11" cy="11" r="9.500" stroke="#333" strokeWidth="2.500" />
            <path d="M11 5v6h5" stroke="#333" strokeWidth="2.500" />
          </Icon>
        </button>
        <button className="ml-5 flex items-center gap-1 whitespace-nowrap">
          Jonathan Odom <Caret />
        </button>
        <button aria-label="Help" className="ml-[17px] flex items-center gap-1">
          <span className="flex size-[11px] items-center justify-center rounded-full bg-[#666] leading-[11px] font-bold text-white">?</span>
          <Caret />
        </button>
      </div>
    </div>
  );
}

const docs = ["Locomoti...ings v2*", "Linear ...emo v1*"];

function DocumentTabs() {
  const [current, setCurrent] = useState(1);
  return (
    <div className="flex h-[15px] shrink-0 bg-[#d6d6d6] text-[8px]">
      {docs.map((name, index) => (
        <div
          key={name}
          className={clsx(
            "flex w-[142px] items-center border-r border-[#999] pr-[5px] pl-[7px]",
            current === index ? "bg-[#ececec] font-bold text-[#333]" : "text-[#888]",
          )}
        >
          <button className="flex flex-1 items-center gap-[6px] whitespace-nowrap" onClick={() => setCurrent(index)}>
            <Icon className="size-[12px]">
              <path d="M1 5l10-4 10 4v11l-10 5-10-5z" fill={current === index ? "#666" : "#999"} />
              <path d="M1 5l10 3 10-3-10-4z" fill="#ccc" />
              <path d="M11 8v13l-10-5V5z" fill={current === index ? "#444" : "#888"} />
            </Icon>
            {name}
          </button>
          <span className="mr-[7px] size-[7px] rounded-full border border-[#68b8a5]" />
          <button aria-label={`Close ${name}`}>
            <svg viewBox="0 0 7 7" className="w-[7px]">
              <path d="M.5.5l6 6M6.500.5l-6 6" stroke="#555" strokeWidth="1.200" />
            </svg>
          </button>
        </div>
      ))}
      <button aria-label="New tab" className="ml-[6px] flex items-center">
        <svg viewBox="0 0 8 8" className="w-[8px]">
          <path d="M4 0v8M0 4h8" stroke="#777" />
        </svg>
      </button>
    </div>
  );
}

function Timeline() {
  const steps = ["sketch", "extrude", "sketch", "sketch", "extrude", "sketch"];
  return (
    <footer className="flex h-[35px] shrink-0 items-center rounded-b-[4px] border-b border-[#a5a5a5] bg-[#cccccc] pl-[6px] text-[#444]">
      <div className="mb-[6px] flex gap-[6px]">
        {[
          ["Go to start", "M4 3v16M18 4v14L8 11z"],
          ["Step back", "M14 4v14L4 11zM19 8v6"],
          ["Play", "M4 2v18l14-9z"],
          ["Step forward", "M8 4v14l11-7zM4 8v6"],
          ["Go to end", "M18 3v16M4 4v14l10-7z"],
        ].map(([name, d]) => (
          <button key={name} aria-label={name}>
            <Icon className="size-[12px]">
              <path d={d} fill="currentColor" stroke="currentColor" strokeWidth="2" />
            </Icon>
          </button>
        ))}
      </div>
      <div className="relative mb-[3px] ml-[12px] flex w-[101px] flex-col">
        <div className="h-[3px] bg-[#6d88dc]" />
        <div className="mt-[2px] flex h-[13px] justify-between pr-[2px] pl-[2px]">
          {steps.map((step, index) => (
            <button key={index} aria-label={step}>
              <Icon className="size-[12px]">
                {step === "sketch" ? (
                  <>
                    <rect x="1.500" y="1.500" width="19" height="19" fill="#e8edf7" stroke="#25436f" strokeWidth="2.500" />
                    <path d="M6 6v10h9M6 16l7-8" stroke="#222" strokeWidth="2" />
                    <path d="M11 12L20 2" stroke="#f0c22f" strokeWidth="4.500" />
                  </>
                ) : (
                  <>
                    <path d="M2 5l4-3h8v15l-4 4H2z" fill="#9dc1ea" stroke="#4a6c99" strokeWidth="1.500" />
                    <path d="M19 21V3M16 6l3-4 3 4" stroke="#333" strokeWidth="1.800" />
                  </>
                )}
              </Icon>
            </button>
          ))}
        </div>
        <svg viewBox="0 0 101 6" className="h-[6px] w-[101px]">
          <path d="M3 4.500h91M8.500 1v4M25.500 1v4M42.500 1v4M59.500 1v4M76.500 1v4M93.500 1v4" stroke="#555" fill="none" />
        </svg>
        <svg viewBox="0 0 10 24" className="absolute top-px -right-[5px] w-[10px]">
          <path d="M0 0h10v3L5 7 0 3z" fill="#666" />
          <path d="M5 5v19" stroke="#555" strokeWidth="1.200" />
        </svg>
      </div>
      <button aria-label="Timeline settings" className="mr-[3px] mb-[6px] ml-auto">
        <Settings size={12} strokeWidth={3} />
      </button>
    </footer>
  );
}

const events = [
  { title: "Labor Day", time: "", dot: "", tone: "bg-[#6f8290] font-bold" },
  { title: "Design Studio me...", time: "11 AM", dot: "bg-[#22407c]", tone: "font-bold" },
  { title: "Fusion Hero Ma...", time: "2:10 PM", dot: "bg-[#555]", tone: "text-[#444]" },
  { title: "Fusion DFM summi...", time: "1 PM", dot: "bg-[#7a2d8c]", tone: "font-bold" },
  { title: "Dad Birthday", time: "1 PM", dot: "bg-[#a81e3c]", tone: "font-bold" },
];

function CalendarStrip() {
  return (
    <div className="flex h-[6px] shrink-0 items-end overflow-hidden bg-linear-to-b from-[#747474] to-[#9a9a9a] text-[8px] leading-[8px] text-[#222]">
      <div className="flex w-[284px] shrink-0 items-center gap-[7px] pl-[14px]">
        <span className="size-[9px] rounded-full bg-[#0d5f46]" />
        Publish Schedule
      </div>
      {events.map(({ title, time, dot, tone }) => (
        <div key={title} className={clsx("mr-[6px] flex w-[118px] shrink-0 items-center gap-1", tone)}>
          {dot && <span className={clsx("size-1 shrink-0 rounded-full", dot)} />}
          <span className="whitespace-nowrap">{title}</span>
          <span className="mr-2 ml-auto font-normal whitespace-nowrap text-[#444]">{time}</span>
        </div>
      ))}
    </div>
  );
}

export default function App() {
  return (
    <div className="flex h-screen min-h-[640px] flex-col overflow-hidden bg-[#6b6b6b] font-['Noto_Sans',sans-serif]">
      <MenuBar />
      <div className="flex min-h-0 flex-1 bg-linear-to-b from-[#5c6285] via-[#4e4038] via-60% to-[#8a8a8a] pr-[2px]">
        <div className="flex min-w-0 flex-1 flex-col">
          <TitleBar />
          <QuickAccess />
          <DocumentTabs />
          <main className="relative flex flex-1 flex-col overflow-hidden bg-[#ededed]">
            <Canvas />
            <Toolbar />
            <div className="relative grid flex-1 grid-cols-[1fr_auto_1fr]">
              <Browser />
              <NavBar />
              <aside className="mr-1 flex w-[177px] flex-col justify-self-end">
                <ViewCube />
                <ProjectPanel />
                <SketchPalette />
              </aside>
            </div>
          </main>
          <Timeline />
        </div>
      </div>
      <CalendarStrip />
    </div>
  );
}
